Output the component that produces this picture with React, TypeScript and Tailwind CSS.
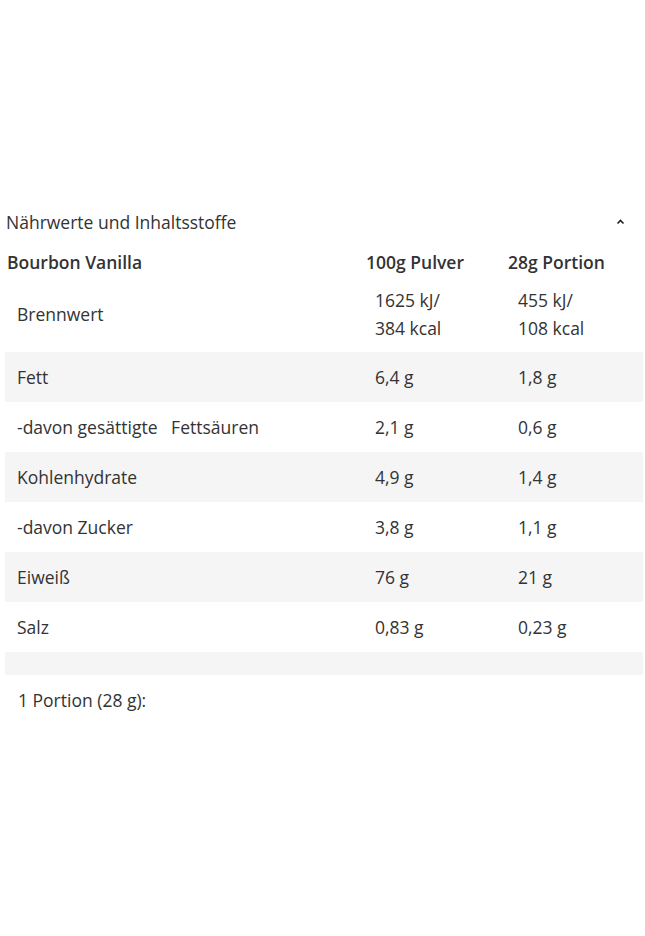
import React from 'react';

const rows = [
  { label: 'Fett', a: '6,4 g', b: '1,8 g', gray: true },
  { label: '-davon gesättigte\u00a0\u00a0 Fettsäuren', a: '2,1 g', b: '0,6 g', gray: false },
  { label: 'Kohlenhydrate', a: '4,9 g', b: '1,4 g', gray: true },
  { label: '-davon Zucker', a: '3,8 g', b: '1,1 g', gray: false },
  { label: 'Eiweiß', a: '76 g', b: '21 g', gray: true },
  { label: 'Salz', a: '0,83 g', b: '0,23 g', gray: false },
];

const App: React.FC = () => {
  return (
    <div className="min-h-[936px] bg-white text-[#333] font-['Open_Sans',sans-serif] text-[17.5px]">
      <div className="pt-[208px] px-[6px]">
        <div className="flex items-center justify-between h-[28px] pr-[14px]">
          <span>Nährwerte und Inhaltsstoffe</span>
          <svg width="9" height="6" viewBox="0 0 9 6" className="text-[#222]">
            <path d="M1.5 4.5 L4.5 1.5 L7.5 4.5" fill="none" stroke="currentColor" strokeWidth="1.6" />
          </svg>
        </div>
      </div>
      <div className="pl-[5px] pr-[2px] pt-[5px]">
        <table className="w-full border-collapse">
          <thead>
            <tr className="h-[42px] align-middle">
              <th className="text-left font-semibold pl-[2px] w-[359px]">Bourbon Vanilla</th>
              <th className="text-left font-semibold pl-[2px] w-[142px]">100g Pulver</th>
              <th className="text-left font-semibold pl-[2px]">28g Portion</th>
            </tr>
          </thead>
          <tbody>
            <tr className="h-[69px] leading-[28px]">
              <td className="pl-[12px] pb-[8px]">Brennwert</td>
              <td className="pl-[11px] pb-[8px]">1625 kJ/<br />384 kcal</td>
              <td className="pl-[12px] pb-[8px]">455 kJ/<br />108 kcal</td>
            </tr>
            {rows.map((r) => (
              <tr key={r.label} className={`h-[50px] ${r.gray ? 'bg-[#f5f5f5]' : 'bg-white'}`}>
                <td className="pl-[12px] whitespace-pre">{r.label}</td>
                <td className="pl-[11px]">{r.a}</td>
                <td className="pl-[12px]">{r.b}</td>
              </tr>
            ))}
            <tr className="h-[23px] bg-[#f5f5f5]">
              <td colSpan={3}></td>
            </tr>
          </tbody>
        </table>
        <p className="pl-[13px] pt-[11px] leading-[28px]">1 Portion (28 g):</p>
      </div>
    </div>
  );
};

export default App;
